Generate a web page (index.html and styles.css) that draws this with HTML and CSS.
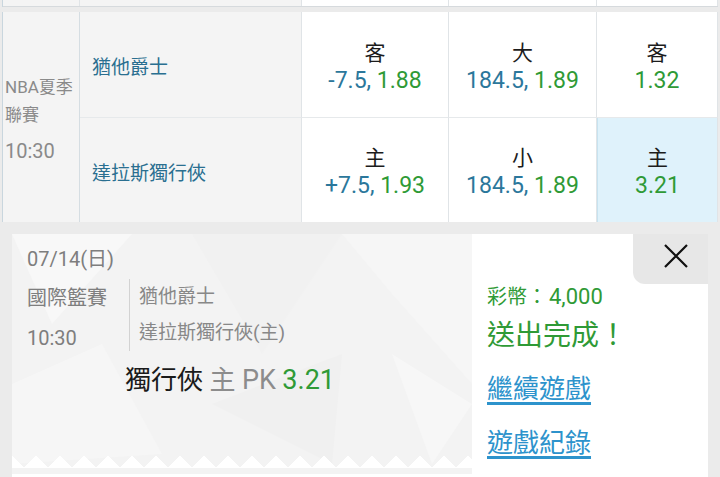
FILE: index.html
```
<!DOCTYPE html>
<html lang="zh-Hant">
<head>
  <meta charset="UTF-8">
  <title>投注單</title>
  <link rel="stylesheet" href="styles.css">
</head>
<body>
  <div class="board">
    <div class="prev">
      <div class="cell grey"></div>
      <div class="cell grey"></div>
      <div class="cell"></div>
      <div class="cell"></div>
      <div class="cell"></div>
    </div>
  </div>
  <div class="band"></div>
  <div class="board">
    <div class="match">
      <div class="cell league">
        <p>NBA夏季</p>
        <p>聯賽</p>
        <p class="time">10:30</p>
      </div>
      <div class="cell team top">猶他爵士</div>
      <div class="cell odds top">
        <span class="lab">客</span>
        <span class="val"><em class="blue">-7.5,</em> <em class="green">1.88</em></span>
      </div>
      <div class="cell odds top">
        <span class="lab">大</span>
        <span class="val"><em class="blue">184.5,</em> <em class="green">1.89</em></span>
      </div>
      <div class="cell odds top">
        <span class="lab">客</span>
        <span class="val"><em class="green">1.32</em></span>
      </div>
      <div class="cell team">達拉斯獨行俠</div>
      <div class="cell odds">
        <span class="lab">主</span>
        <span class="val"><em class="blue">+7.5,</em> <em class="green">1.93</em></span>
      </div>
      <div class="cell odds">
        <span class="lab">小</span>
        <span class="val"><em class="blue">184.5,</em> <em class="green">1.89</em></span>
      </div>
      <div class="cell odds picked">
        <span class="lab">主</span>
        <span class="val"><em class="green">3.21</em></span>
      </div>
    </div>
  </div>
  <div class="gap"></div>

  <div class="popup">
    <div class="ticket">
      <svg class="facets" width="460" height="240" viewBox="0 0 460 240">
        <polygon points="0,0 120,0 40,90" fill="#f8f8f8"/>
        <polygon points="180,0 330,0 250,120" fill="#f1f1f1"/>
        <polygon points="330,0 460,0 460,150 380,60" fill="#f6f6f6"/>
        <polygon points="0,150 90,110 150,220 0,230" fill="#f6f6f6"/>
        <polygon points="200,170 330,120 320,230" fill="#f0f0f0"/>
        <polygon points="380,120 460,170 420,230" fill="#f7f7f7"/>
      </svg>
      <div class="ticket-body">
        <div class="date">07/14(日)</div>
        <div class="info">
          <div class="meta">
            <p>國際籃賽</p>
            <p>10:30</p>
          </div>
          <div class="teams">
            <p>猶他爵士</p>
            <p>達拉斯獨行俠(主)</p>
          </div>
        </div>
        <div class="pick">獨行俠 <span class="dim">主 <b>PK</b></span> <b class="green">3.21</b></div>
      </div>
    </div>
    <div class="side">
      <p class="coins">彩幣：<b>4,000</b></p>
      <p class="done">送出完成！</p>
      <a class="link" href="#">繼續遊戲</a>
      <a class="link" href="#">遊戲紀錄</a>
    </div>
    <div class="close">
      <svg width="24" height="24" viewBox="0 0 24 24">
        <path d="M1 1 L23 23 M23 1 L1 23" stroke="#111" stroke-width="2.2" fill="none"/>
      </svg>
    </div>
  </div>
</body>
</html>
```

FILE: styles.css
```
*{
  margin: 0;
  padding: 0;
  box-sizing: border-box;
}
body{
  width: 720px;
  height: 477px;
  overflow: hidden;
  background: #ebebeb;
  font-family: Roboto, "Noto Sans CJK TC", sans-serif;
}
em{
  font-style: normal;
}
b{
  font-weight: normal;
}
.blue{
  color: #2b779b;
}
.green{
  color: #2f9a36;
}
.board{
  margin-left: 2px;
  width: 716px;
  border-left: 1px solid #c9d6de;
}
.prev,.match{
  display: grid;
  grid-template-columns: 77px 222px 147px 148px 121px;
}
.prev{
  height: 7px;
  border-bottom: 1px solid #d6dadd;
}
.cell{
  background: #fff;
  border-right: 1px solid #e0e4e7;
}
.cell.grey{
  background: #f4f4f4;
}
.band{
  height: 5px;
}
.match{
  grid-template-rows: 106px 104px;
}
.league{
  grid-row: span 2;
  background: #f4f4f4;
  color: #8a8a8a;
  font-size: 17px;
  line-height: 28px;
  padding: 61px 0 0 2px;
  border-right-color: #d5dde2;
}
.league .time{
  font-size: 20px;
  line-height: 44px;
}
.team{
  background: #f4f4f4;
  color: #2a6f90;
  font-size: 19px;
  display: flex;
  align-items: center;
  padding: 2px 0 0 12px;
}
.top{
  border-bottom: 1px solid #e6e9eb;
}
.odds{
  display: flex;
  flex-direction: column;
  align-items: center;
  justify-content: center;
  padding-top: 5px;
}
.lab{
  font-size: 21px;
  line-height: 27px;
  color: #1c1c1c;
}
.val{
  font-size: 23px;
  line-height: 28px;
}
.picked{
  background: #dff2fb;
  border-left: 1px solid #c7e3f0;
}
.gap{
  height: 12px;
}

.popup{
  position: relative;
  margin-left: 12px;
  width: 696px;
  height: 260px;
  display: flex;
}
.ticket{
  position: relative;
  width: 460px;
  background: #fff;
}
.facets{
  position: absolute;
  left: 0;
  top: 0;
  background: #f3f3f3;
}
.ticket-body{
  position: relative;
  height: 234px;
  padding: 13px 0 0 15px;
  color: #7e7e7e;
}
.ticket-body::after{
  content: "";
  position: absolute;
  left: 0;
  right: 0;
  bottom: 0;
  height: 12px;
  background:
    linear-gradient(45deg, #fff 8.5px, transparent 0) left bottom,
    linear-gradient(-45deg, #fff 8.5px, transparent 0) left bottom;
  background-size: 24px 24px;
  background-repeat: repeat-x;
}
.date{
  font-size: 20px;
  line-height: 24px;
}
.info{
  display: flex;
  margin-top: 7px;
}
.meta{
  width: 102px;
  font-size: 20px;
  line-height: 40px;
}
.teams{
  margin-top: 1px;
  height: 72px;
  border-left: 1px solid #d2d2d2;
  padding-left: 9px;
  font-size: 19px;
  line-height: 36px;
  color: #888;
}
.pick{
  margin-top: 6px;
  padding-left: 98px;
  font-size: 26px;
  line-height: 32px;
  color: #1a1a1a;
}
.pick b{
  font-size: 27px;
}
.pick .dim{
  color: #8c8c8c;
}
.side{
  flex: 1;
  background: #fff;
  padding: 51px 0 0 15px;
  display: flex;
  flex-direction: column;
  align-items: flex-start;
}
.coins{
  font-size: 20px;
  line-height: 24px;
  color: #2f9a36;
}
.coins b{
  font-size: 22px;
  margin-left: 2px;
}
.done{
  margin-top: 9px;
  font-size: 28px;
  line-height: 36px;
  color: #2f9a36;
}
.link{
  font-size: 26px;
  line-height: 32px;
  color: #2d93cc;
  text-decoration: underline;
  text-decoration-thickness: 3px;
  text-underline-offset: 4px;
}
.done + .link{
  margin-top: 19px;
}
.link + .link{
  margin-top: 22px;
}
.close{
  position: absolute;
  top: 0;
  right: 0;
  width: 75px;
  height: 50px;
  background: #e7e7e7;
  border-bottom-left-radius: 12px;
  display: flex;
  align-items: center;
  justify-content: center;
  padding: 0 0 6px 11px;
}
```
